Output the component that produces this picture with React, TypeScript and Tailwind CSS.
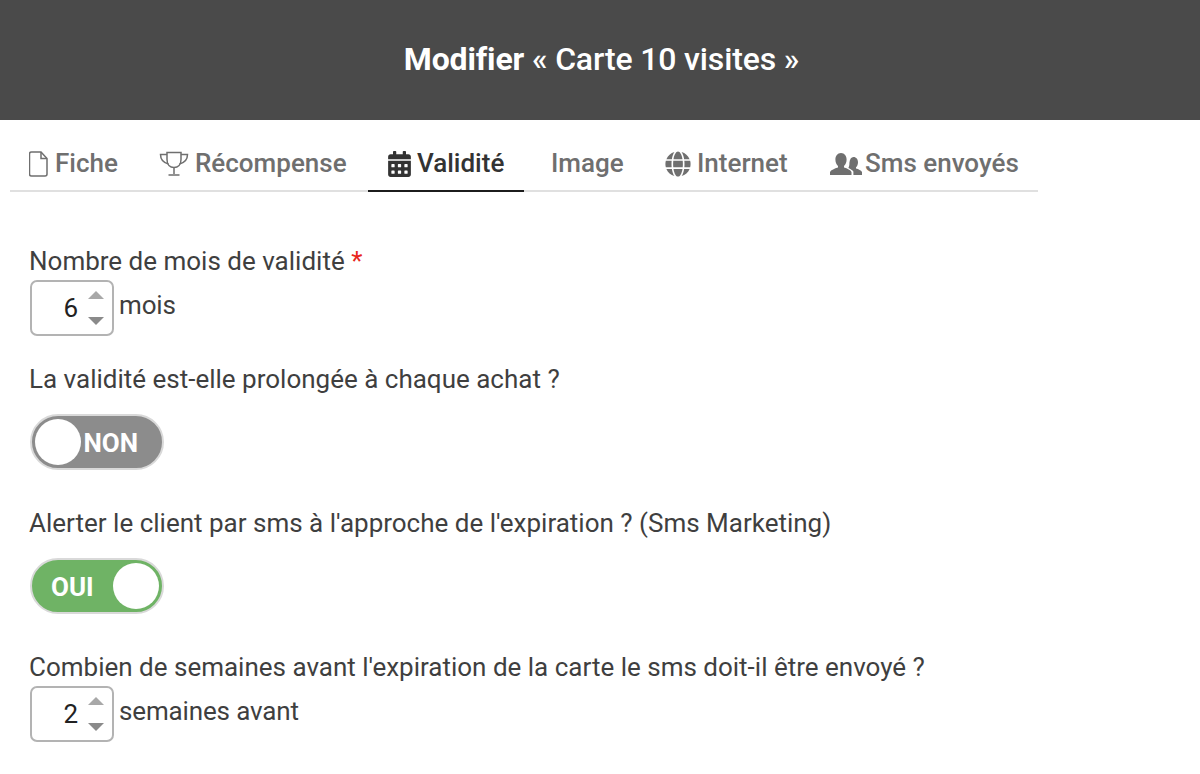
import { FaCalendarAlt, FaGlobe } from "react-icons/fa";
import type { ReactNode } from "react";

function FileIcon() {
  return (
    <svg width="19" height="26" viewBox="0 0 19 26" fill="none" stroke="currentColor" strokeWidth="1.5" className="shrink-0">
      <path d="M2.500 1h9.500l6 6.500V23c0 1.200-.8 2-2 2H2.500c-1.200 0-2-.8-2-2V3c0-1.200.8-2 2-2z" />
      <path d="M12 1v6.500h6" />
    </svg>
  );
}

function TrophyIcon() {
  return (
    <svg width="30" height="26" viewBox="0 0 30 26" fill="none" stroke="currentColor" strokeWidth="1.5" className="shrink-0">
      <path d="M8 1.500h14v7c0 5-3 8-7 8s-7-3-7-8z" />
      <path d="M8 3.500H1.500c0 5 2.500 8 8 9.500M22 3.500h6.500c0 5-2.500 8-8 9.500" />
      <path d="M15 16.500v6.500M9.500 24h11" />
    </svg>
  );
}

function UsersIcon() {
  return (
    <svg width="32" height="24" viewBox="0 0 32 24" fill="currentColor" className="shrink-0">
      <path d="M11 1c3.600 0 5.600 3 5.600 6.600 0 2.800-1 5-2.600 6.400v1.600c3.400 1 6.600 2.600 7.500 4.400V23H0v-3c.9-1.800 4.600-3.400 8-4.400V14c-1.600-1.400-2.600-3.600-2.600-6.400C5.400 4 7.400 1 11 1z" />
      <path d="M23.500 5c2.800 0 4.500 2.400 4.500 5.200 0 2.200-.8 4-2 5.100v1.300c2.600.7 5 1.900 6 3.400V23h-8.600v-3.400c-.9-1.400-2.800-2.600-5-3.600.8-1.500 1.100-3.300 1-5.300C19.700 7.400 21.200 5 23.500 5z" />
    </svg>
  );
}

function Tab({ icon, label, active, className }: { icon?: ReactNode; label: string; active?: boolean; className: string }) {
  return (
    <div
      className={`-mb-[2px] flex h-[44px] items-center border-b-2 pb-[10px] ${className} ${
        active ? "border-[#1c1c1c] text-[#333333]" : "border-transparent text-[#6f6f6f]"
      }`}
    >
      {icon}
      <span className="-translate-y-[1px] text-[26px] font-medium">{label}</span>
    </div>
  );
}

function NumberField({ value, unit }: { value: number; unit: string }) {
  return (
    <div className="flex items-start">
      <div className="flex h-[56px] w-[84px] items-center justify-end rounded-[7px] border-2 border-[#b3b3b3] pr-[8px]">
        <span className="mr-[10px] text-[26px] text-[#222222]">{value}</span>
        <div className="flex flex-col gap-[18px]">
          <div className="h-0 w-0 border-x-[8px] border-b-[8px] border-x-transparent border-b-[#a8a8a8]" />
          <div className="h-0 w-0 border-x-[8px] border-t-[8px] border-x-transparent border-t-[#8a8a8a]" />
        </div>
      </div>
      <span className="ml-[5px] text-[26px] leading-[50px] tracking-[-0.15px]">{unit}</span>
    </div>
  );
}

function Toggle({ on }: { on: boolean }) {
  return (
    <div
      className={`flex h-[56px] w-[134px] items-center justify-between rounded-full border-2 border-[#d9d9d9] ${
        on ? "bg-[#6fb365] pl-[19px] pr-[3px]" : "bg-[#8c8c8c] pl-[3px] pr-[24px]"
      }`}
    >
      {on ? <span className="pt-[2px] text-[26px] font-bold text-white">OUI</span> : <div className="size-[46px] rounded-full bg-white" />}
      {on ? <div className="size-[46px] rounded-full bg-white" /> : <span className="pt-[2px] text-[26px] font-bold text-white">NON</span>}
    </div>
  );
}

export default function App() {
  return (
    <div className="h-[774px] overflow-hidden bg-white font-['Roboto',sans-serif] text-[#3f3f3f]">
      <div className="flex h-[120px] items-center justify-center bg-[#4a4a4a] pb-[2px] pl-[3px]">
        <h1 className="text-[32px] font-medium tracking-[-0.15px] text-white">
          <span className="font-bold">Modifier</span> « Carte 10 visites »
        </h1>
      </div>

      <div className="ml-[10px] mt-[28px] flex w-[1028px] border-b-2 border-[#e0e0e0]">
        <Tab className="w-[128px] gap-[7px] pl-[19px]" icon={<FileIcon />} label="Fiche" />
        <Tab className="w-[230px] gap-[6px] pl-[21px]" icon={<TrophyIcon />} label="Récompense" />
        <Tab className="w-[156px] gap-[6px] pl-[20px]" active icon={<FaCalendarAlt size={26} className="w-[23px]" />} label="Validité" />
        <Tab className="w-[140px] pl-[27px]" label="Image" />
        <Tab className="w-[166px] gap-[6px] pl-[1px]" icon={<FaGlobe size={26} className="w-[26px]" />} label="Internet" />
        <Tab className="gap-[3px]" icon={<UsersIcon />} label="Sms envoyés" />
      </div>

      <div className="ml-[29px] mt-[50px] text-[26px]">
        <div className="leading-[38px]">
          Nombre de mois de validité <span className="text-[#e8261c]">*</span>
        </div>
        <div className="ml-[1px]">
          <NumberField value={6} unit="mois" />
        </div>
        <div className="mb-[16px] mt-[24px] leading-[38px]">La validité est-elle prolongée à chaque achat ?</div>
        <div className="ml-[1px]">
          <Toggle on={false} />
        </div>
        <div className="mb-[16px] mt-[34px] leading-[38px]">Alerter le client par sms à l'approche de l'expiration ? (Sms Marketing)</div>
        <div className="ml-[1px]">
          <Toggle on />
        </div>
        <div className="mt-[34px] leading-[38px]">Combien de semaines avant l'expiration de la carte le sms doit-il être envoyé ?</div>
        <div className="ml-[1px]">
          <NumberField value={2} unit="semaines avant" />
        </div>
      </div>
    </div>
  );
}
